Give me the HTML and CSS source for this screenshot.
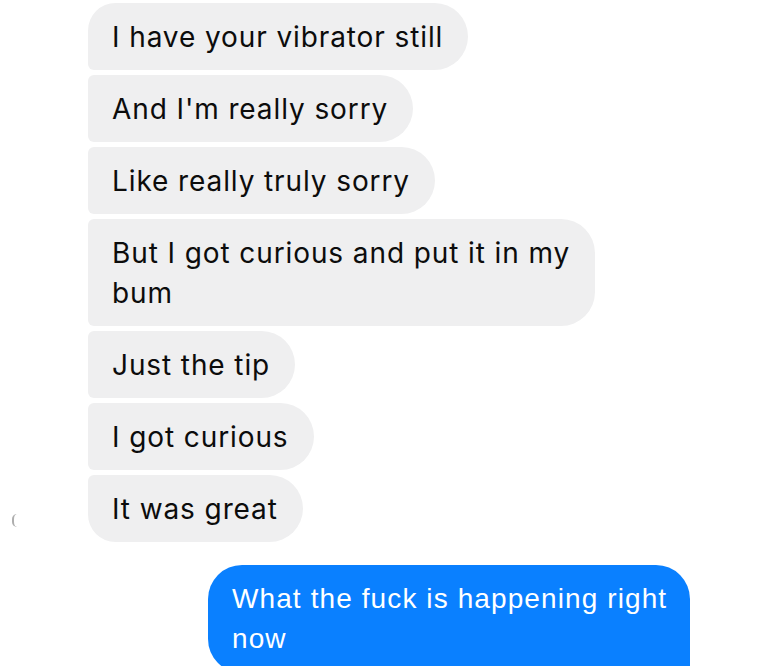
FILE: index.html
```html
<!DOCTYPE html>
<html>
<head>
<meta charset="utf-8">
<link rel="stylesheet" href="styles.css">
</head>
<body>
<div class="thread">
  <div class="group incoming">
    <div class="row"><div class="avatar-slot"></div><div class="bubble first">I have your vibrator still</div></div>
    <div class="row"><div class="avatar-slot"></div><div class="bubble mid">And I'm really sorry</div></div>
    <div class="row"><div class="avatar-slot"></div><div class="bubble mid">Like really truly sorry</div></div>
    <div class="row"><div class="avatar-slot"></div><div class="bubble mid">But I got curious and put it in my<br>bum</div></div>
    <div class="row"><div class="avatar-slot"></div><div class="bubble mid">Just the tip</div></div>
    <div class="row"><div class="avatar-slot"></div><div class="bubble mid">I got curious</div></div>
    <div class="row"><div class="avatar-slot"><span class="avatar-edge"></span></div><div class="bubble last">It was great</div></div>
  </div>
  <div class="group outgoing">
    <div class="bubble out">What the fuck is happening right<br>now</div>
  </div>
</div>
</body>
</html>
```
FILE: styles.css
```css
* { box-sizing: border-box; }
html, body {
  margin: 0;
  padding: 0;
  background: #ffffff;
}
body {
  width: 760px;
  height: 666px;
  overflow: hidden;
  font-family: "Inter", "Liberation Sans", sans-serif;
  font-size: 28px;
  letter-spacing: 0.9px;
  line-height: 40px;
  color: #0c0c0c;
}
.thread {
  display: flex;
  flex-direction: column;
  padding-top: 3px;
}
.group {
  display: flex;
  flex-direction: column;
  gap: 5px;
}
.row {
  display: flex;
  align-items: stretch;
}
.avatar-slot {
  width: 88px;
  flex: 0 0 88px;
  display: flex;
  align-items: flex-end;
  padding-left: 12px;
  padding-bottom: 15px;
}
.avatar-edge {
  display: block;
  width: 5px;
  height: 13px;
  border-left: 2px solid #9a9a9a;
  border-radius: 6px 0 0 6px;
  opacity: 0.8;
}
.bubble {
  background: #efeff0;
  padding: 14px 25px 13px 24px;
  white-space: nowrap;
  border-radius: 6px 34px 34px 6px;
}
.bubble.first {
  border-top-left-radius: 28px;
}
.bubble.last {
  border-bottom-left-radius: 28px;
}
.outgoing {
  margin-top: 23px;
  padding-left: 208px;
  align-items: flex-start;
}
.bubble.out {
  background: #0a80ff;
  color: #ffffff;
  font-family: "Liberation Sans", "Inter", sans-serif;
  letter-spacing: 1.1px;
  border-radius: 34px 34px 8px 34px;
  padding: 14px 23px 14px 24px;
}
```
